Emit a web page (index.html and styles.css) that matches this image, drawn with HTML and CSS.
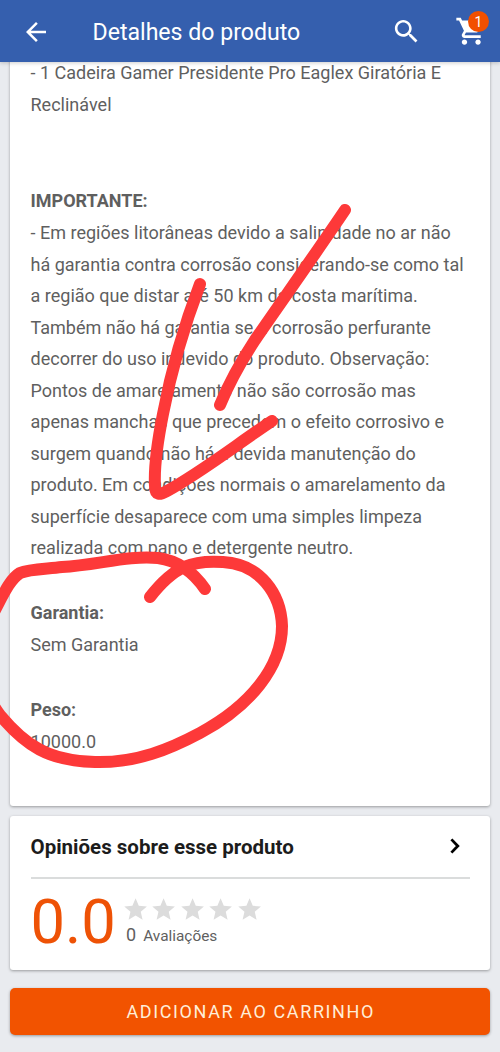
FILE: index.html
```html
<!DOCTYPE html>
<html lang="pt-BR">
<head>
    <meta charset="UTF-8">
    <meta name="viewport" content="width=device-width, initial-scale=1.0">
    <title>Detalhes do produto</title>
    <link rel="stylesheet" href="styles.css">
</head>
<body>
    <header class="topbar">
        <svg class="icon-back" viewBox="0 0 24 24"><path d="M20 11H7.83l5.59-5.59L12 4l-8 8 8 8 1.41-1.41L7.83 13H20v-2z"/></svg>
        <h1>Detalhes do produto</h1>
        <svg class="icon-search" viewBox="0 0 24 24"><path d="M15.5 14h-.79l-.28-.27C15.41 12.59 16 11.11 16 9.5 16 5.91 13.09 3 9.5 3S3 5.91 3 9.5 5.91 16 9.5 16c1.61 0 3.09-.59 4.23-1.57l.27.28v.79l5 4.99L20.49 19l-4.99-5zm-6 0C7.01 14 5 11.99 5 9.5S7.01 5 9.5 5 14 7.01 14 9.5 11.99 14 9.5 14z"/></svg>
        <div class="cart">
            <svg class="icon-cart" viewBox="0 0 24 24"><path d="M7 18c-1.1 0-1.99.9-1.99 2S5.9 22 7 22s2-.9 2-2-.9-2-2-2zM1 2v2h2l3.6 7.59-1.35 2.45c-.16.28-.25.61-.25.96 0 1.1.9 2 2 2h12v-2H7.42c-.14 0-.25-.11-.25-.25l.03-.12.9-1.63h7.45c.75 0 1.41-.41 1.75-1.03l3.58-6.49c.08-.14.12-.31.12-.48 0-.55-.45-1-1-1H5.21l-.94-2H1zm16 16c-1.1 0-1.99.9-1.99 2s.89 2 1.99 2 2-.9 2-2-.9-2-2-2z"/></svg>
            <span class="badge">1</span>
        </div>
    </header>

    <main>
        <section class="card description">
            <p>- 1 Cadeira Gamer Presidente Pro Eaglex Giratória E<br>Reclinável</p>
            <h2 class="important">IMPORTANTE:</h2>
            <p>- Em regiões litorâneas devido a salinidade no ar não<br>
                há garantia contra corrosão considerando-se como tal<br>
                a região que distar até 50 km da costa marítima.<br>
                Também não há garantia se a corrosão perfurante<br>
                decorrer do uso indevido do produto. Observação:<br>
                Pontos de amarelamento não são corrosão mas<br>
                apenas manchas que precedem o efeito corrosivo e<br>
                surgem quando não há a devida manutenção do<br>
                produto. Em condições normais o amarelamento da<br>
                superfície desaparece com uma simples limpeza<br>
                realizada com pano e detergente neutro.</p>
            <h2>Garantia:</h2>
            <p>Sem Garantia</p>
            <h2 class="weight">Peso:</h2>
            <p>10000.0</p>
        </section>

        <section class="card reviews">
            <div class="reviews-header">
                <h3>Opiniões sobre esse produto</h3>
                <svg class="icon-chevron" viewBox="0 0 10 16"><path d="M1.4 1.4 7.8 8l-6.4 6.6"/></svg>
            </div>
            <div class="rating">
                <span class="score">0.0</span>
                <div>
                    <div class="stars">
                        <svg viewBox="0 0 24 24"><path d="M12 17.27 18.18 21l-1.64-7.03L22 9.24l-7.19-.61L12 2 9.19 8.63 2 9.24l5.46 4.73L5.82 21z"/></svg>
                        <svg viewBox="0 0 24 24"><path d="M12 17.27 18.18 21l-1.64-7.03L22 9.24l-7.19-.61L12 2 9.19 8.63 2 9.24l5.46 4.73L5.82 21z"/></svg>
                        <svg viewBox="0 0 24 24"><path d="M12 17.27 18.18 21l-1.64-7.03L22 9.24l-7.19-.61L12 2 9.19 8.63 2 9.24l5.46 4.73L5.82 21z"/></svg>
                        <svg viewBox="0 0 24 24"><path d="M12 17.27 18.18 21l-1.64-7.03L22 9.24l-7.19-.61L12 2 9.19 8.63 2 9.24l5.46 4.73L5.82 21z"/></svg>
                        <svg viewBox="0 0 24 24"><path d="M12 17.27 18.18 21l-1.64-7.03L22 9.24l-7.19-.61L12 2 9.19 8.63 2 9.24l5.46 4.73L5.82 21z"/></svg>
                    </div>
                    <div class="count"><span class="number">0</span><span>Avaliações</span></div>
                </div>
            </div>
        </section>

        <button class="add-cart" type="button">ADICIONAR AO CARRINHO</button>
    </main>

    <!-- Marcações à mão: seta e círculo -->
    <svg class="marks" viewBox="0 0 500 1052">
        <path d="M345 210C318 250 284 298 255 340C240 363 229 383 220 405"/>
        <path d="M200 284C184 326 171 372 163 414C157 444 154 468 155 486C155 496 160 495 167 491C200 473 236 445 272 421"/>
        <path d="M205 589C194 573 180 561 158 558C129 555 97 565 62 567C45 569 29 569 20 573C10 579 3 595 -6 612C-28 655 -20 688 0 715C25 745 48 761 95 762C137 763 170 749 200 733C250 706 282 667 282 626C281 594 260 564 223 562C193 560 175 565 150 597"/>
    </svg>
</body>
</html>
```

FILE: styles.css
```css
* {
    box-sizing: border-box;
}
body {
    font-family: Roboto, "Liberation Sans", sans-serif;
    margin: 0;
    height: 1052px;
    overflow: hidden;
    position: relative;
    background-color: #e9ebef;
    color: #5f5f5f;
}
h1, h2, h3, p {
    margin: 0;
}
svg {
    display: block;
    flex-shrink: 0;
}
.topbar {
    display: flex;
    align-items: center;
    height: 62px;
    padding: 2px 13px 0 21px;
    background-color: #355fae;
    color: #fff;
    fill: #fff;
    box-shadow: 0 1px 4px rgba(0, 0, 0, 0.2);
    position: relative;
}
.topbar h1 {
    margin-left: 41.5px;
    padding-top: 1px;
    font-size: 23.1px;
    font-weight: 400;
    white-space: nowrap;
}
.icon-back {
    width: 30px;
    height: 30px;
    margin-top: -1px;
}
.icon-search {
    width: 31px;
    height: 31px;
    margin-left: auto;
    margin-top: -2px;
}
.cart {
    position: relative;
    margin-left: 33px;
    margin-top: -2px;
}
.icon-cart {
    width: 32.5px;
    height: 32.5px;
}
.badge {
    position: absolute;
    top: -4px;
    right: -2px;
    width: 21px;
    height: 21px;
    border-radius: 50%;
    background-color: #f25000;
    font-size: 14px;
    line-height: 22px;
    text-align: center;
}
main {
    padding: 0 10px;
}
.card {
    background-color: #fff;
    border-radius: 3px;
    box-shadow: 0 1px 3px rgba(0, 0, 0, 0.35);
}
.description {
    height: 748.5px;
    margin-top: -5px;
    padding: 0 20.5px;
    font-size: 18.03px;
    line-height: 31.5px;
    white-space: nowrap;
}
.description h2 {
    margin-top: 33px;
    font-size: 18px;
    font-weight: 700;
    line-height: 32px;
}
.description .important {
    margin-top: 65px;
}
.description .weight {
    margin-top: 34px;
}
.reviews {
    height: 154.5px;
    margin-top: 10px;
    padding: 0 20.5px;
}
.reviews-header {
    display: flex;
    align-items: center;
    justify-content: space-between;
    height: 63px;
    border-bottom: 2px solid #dadcdc;
    padding-right: 10px;
}
.reviews-header h3 {
    padding-top: 2px;
    font-size: 20.5px;
    font-weight: 700;
    color: #1c1c1c;
    white-space: nowrap;
}
.icon-chevron {
    width: 10px;
    height: 16px;
    fill: none;
    stroke: #000;
    stroke-width: 2.8;
}
.rating {
    display: flex;
}
.score {
    width: 91px;
    font-size: 61.5px;
    line-height: 86px;
    color: #ee5206;
}
.stars {
    display: flex;
    gap: 1.4px;
    margin-top: 17.5px;
    fill: #dcdcdc;
}
.stars svg {
    width: 27.2px;
    height: 27.2px;
}
.count {
    display: flex;
    align-items: baseline;
    gap: 7px;
    margin-left: 4.5px;
    font-size: 15.4px;
    line-height: 24px;
}
.number {
    font-size: 18px;
}
.add-cart {
    display: block;
    width: 100%;
    height: 47px;
    margin-top: 17.5px;
    border: 0;
    border-radius: 5px;
    background-color: #f25300;
    color: #ffeed8;
    font: 400 18px Roboto, "Liberation Sans", sans-serif;
    letter-spacing: 1.6px;
    text-indent: 1.5px;
    box-shadow: 0 1px 3px rgba(0, 0, 0, 0.35);
}
.marks {
    position: absolute;
    top: 0;
    left: 0;
    width: 500px;
    height: 1052px;
    fill: none;
    stroke: #fd3939;
    stroke-width: 12;
    stroke-linecap: round;
    stroke-linejoin: round;
}
```
